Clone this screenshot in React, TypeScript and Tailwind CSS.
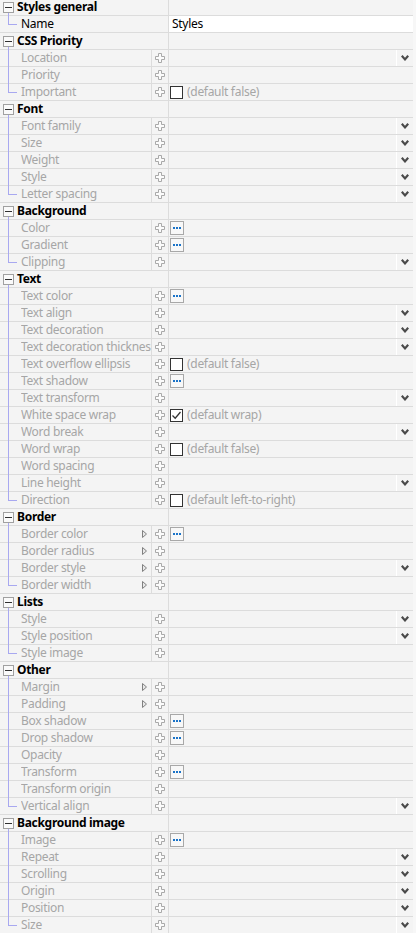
import React from "react"

type Editor = "none" | "select" | "dots" | "check" | "checked"
type Prop = { name: string; ed: Editor; note?: string; tri?: boolean }
type Group = { title: string; props: Prop[] }

const groups: Group[] = [
  {
    title: "CSS Priority",
    props: [
      { name: "Location", ed: "select" },
      { name: "Priority", ed: "none" },
      { name: "Important", ed: "check", note: "(default false)" },
    ],
  },
  {
    title: "Font",
    props: [
      { name: "Font family", ed: "select" },
      { name: "Size", ed: "select" },
      { name: "Weight", ed: "select" },
      { name: "Style", ed: "select" },
      { name: "Letter spacing", ed: "select" },
    ],
  },
  {
    title: "Background",
    props: [
      { name: "Color", ed: "dots" },
      { name: "Gradient", ed: "dots" },
      { name: "Clipping", ed: "select" },
    ],
  },
  {
    title: "Text",
    props: [
      { name: "Text color", ed: "dots" },
      { name: "Text align", ed: "select" },
      { name: "Text decoration", ed: "select" },
      { name: "Text decoration thickness", ed: "select" },
      { name: "Text overflow ellipsis", ed: "check", note: "(default false)" },
      { name: "Text shadow", ed: "dots" },
      { name: "Text transform", ed: "select" },
      { name: "White space wrap", ed: "checked", note: "(default wrap)" },
      { name: "Word break", ed: "select" },
      { name: "Word wrap", ed: "check", note: "(default false)" },
      { name: "Word spacing", ed: "none" },
      { name: "Line height", ed: "select" },
      { name: "Direction", ed: "check", note: "(default left-to-right)" },
    ],
  },
  {
    title: "Border",
    props: [
      { name: "Border color", ed: "dots", tri: true },
      { name: "Border radius", ed: "none", tri: true },
      { name: "Border style", ed: "select", tri: true },
      { name: "Border width", ed: "none", tri: true },
    ],
  },
  {
    title: "Lists",
    props: [
      { name: "Style", ed: "select" },
      { name: "Style position", ed: "select" },
      { name: "Style image", ed: "none" },
    ],
  },
  {
    title: "Other",
    props: [
      { name: "Margin", ed: "none", tri: true },
      { name: "Padding", ed: "none", tri: true },
      { name: "Box shadow", ed: "dots" },
      { name: "Drop shadow", ed: "dots" },
      { name: "Opacity", ed: "none" },
      { name: "Transform", ed: "dots" },
      { name: "Transform origin", ed: "none" },
      { name: "Vertical align", ed: "select" },
    ],
  },
  {
    title: "Background image",
    props: [
      { name: "Image", ed: "dots" },
      { name: "Repeat", ed: "select" },
      { name: "Scrolling", ed: "select" },
      { name: "Origin", ed: "select" },
      { name: "Position", ed: "select" },
      { name: "Size", ed: "select" },
    ],
  },
]

const PlusIcon = () => (
  <svg width="10" height="10" viewBox="0 0 10 10">
    <path d="M3.5 0.5h3v3h3v3h-3v3h-3v-3h-3v-3h3z" fill="#fbfbfb" stroke="#a9a9a9" strokeWidth="1" />
  </svg>
)

const Chevron = () => (
  <svg width="8" height="6" viewBox="0 0 8 6">
    <path d="M0.8 0.8L4 4.4L7.2 0.8" fill="none" stroke="#4a4a4a" strokeWidth="2.2" />
  </svg>
)

const Triangle = () => (
  <svg width="5" height="8" viewBox="0 0 5 8">
    <path d="M0.5 0.5L4.5 4L0.5 7.5z" fill="#e8e8e8" stroke="#808080" strokeWidth="1" />
  </svg>
)

const MinusBox = () => (
  <div className="absolute left-[3px] top-[3px] w-[11px] h-[11px] border border-[#a0a0a0] bg-[#fafafa] flex items-center justify-center">
    <div className="w-[7px] h-px bg-[#303030]" />
  </div>
)

// tree connector for a child row
const TreeLine = ({ last }: { last: boolean }) => (
  <div className="relative w-[21px] shrink-0 self-stretch">
    {last ? (
      <>
        <div className="absolute left-[8px] top-[-1px] h-[9px] w-px bg-[#a8a8f0]" />
        <div className="absolute left-[8px] top-[8px] h-px w-[9px] bg-[#a8a8f0]" />
      </>
    ) : (
      <div className="absolute left-[8px] top-[-1px] bottom-[-1px] w-px bg-[#a8a8f0]" />
    )}
  </div>
)

const CheckBox = ({ checked }: { checked: boolean }) => (
  <div className="w-[13px] h-[13px] border border-[#333] bg-white flex items-center justify-center shrink-0">
    {checked && (
      <svg width="11" height="11" viewBox="0 0 11 11">
        <path d="M1.5 5.5L4.2 8.2L9.5 2" fill="none" stroke="#333" strokeWidth="1.3" />
      </svg>
    )}
  </div>
)

const DotsButton = () => (
  <div className="w-[14px] h-[14px] border border-[#a8a8a8] bg-[#f8f8f8] flex items-center justify-center gap-px shrink-0">
    <div className="w-[2px] h-[2px] bg-[#1a73c8]" />
    <div className="w-[2px] h-[2px] bg-[#1a73c8]" />
    <div className="w-[2px] h-[2px] bg-[#1a73c8]" />
  </div>
)

const Value = ({ p }: { p: Prop }) => {
  if (p.ed === "select")
    return (
      <div className="flex-1 flex">
        <div className="flex-1" />
        <div className="w-[17px] border-l border-white flex items-center justify-center">
          <Chevron />
        </div>
      </div>
    )
  if (p.ed === "dots")
    return (
      <div className="flex-1 flex items-center pl-[1px]">
        <DotsButton />
      </div>
    )
  if (p.ed === "check" || p.ed === "checked")
    return (
      <div className="flex-1 flex items-center pl-[1px] gap-[4px]">
        <CheckBox checked={p.ed === "checked"} />
        <span className="text-[#a6a6a6] whitespace-nowrap">{p.note}</span>
      </div>
    )
  return <div className="flex-1" />
}

const GroupHeader = ({ title }: { title: string }) => (
  <div className="flex h-[17px] border-b border-[#dcdcdc]">
    <div className="relative w-[169px] border-r border-[#dcdcdc] pl-[17px] font-bold text-black leading-[16px] whitespace-nowrap overflow-hidden">
      <MinusBox />
      <div className="absolute left-[8px] top-[14px] h-[3px] w-px bg-[#a8a8f0]" />
      {title}
    </div>
    <div className="flex-1" />
  </div>
)

const PropRow = ({ p, last }: { p: Prop; last: boolean }) => (
  <div className="flex h-[17px] border-b border-[#dcdcdc]">
    <div className="flex w-[152px] border-r border-[#dcdcdc] items-center">
      <TreeLine last={last} />
      <span className="flex-1 text-[#a6a6a6] whitespace-nowrap overflow-hidden leading-[16px]">{p.name}</span>
      {p.tri && (
        <span className="w-[9px] shrink-0 flex items-center">
          <Triangle />
        </span>
      )}
    </div>
    <div className="w-[17px] border-r border-[#dcdcdc] flex items-center justify-center">
      <PlusIcon />
    </div>
    <Value p={p} />
  </div>
)

export default function App() {
  return (
    <div
      className="w-[416px] h-[933px] overflow-hidden bg-[#f7f7f7] text-[12px] tracking-[-0.3px]"
      style={{ fontFamily: '"Noto Sans", "Open Sans", sans-serif' }}
    >
      <div className="w-[413px] mt-[-1px] bg-[#f4f4f4]">
        <GroupHeader title="Styles general" />
        <div className="flex h-[17px] border-b border-[#dcdcdc]">
          <div className="flex w-[169px] border-r border-[#dcdcdc] items-center">
            <TreeLine last />
            <span className="text-black leading-[16px]">Name</span>
          </div>
          <div className="flex-1 bg-white pl-[3px] text-black leading-[16px]">Styles</div>
        </div>
        {groups.map((g) => (
          <div key={g.title}>
            <GroupHeader title={g.title} />
            {g.props.map((p, i) => (
              <PropRow key={p.name} p={p} last={i === g.props.length - 1} />
            ))}
          </div>
        ))}
      </div>
    </div>
  )
}
